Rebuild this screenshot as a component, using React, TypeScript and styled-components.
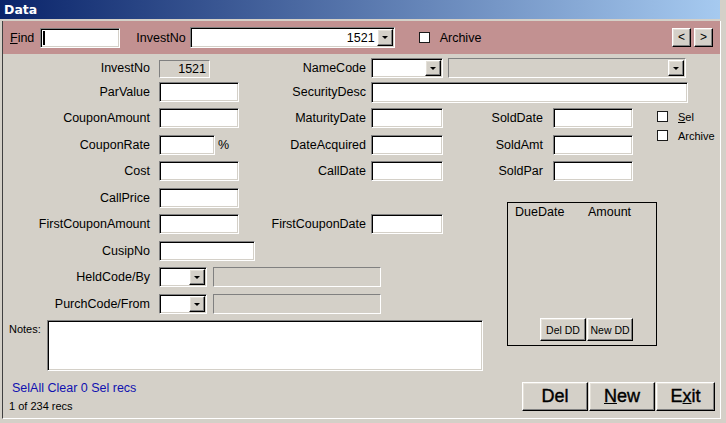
import React from "react";
import styled, { createGlobalStyle, css } from "styled-components";

const GlobalStyle = createGlobalStyle`
  html, body {
    margin: 0;
    padding: 0;
    background: #d4d0c8;
  }
  body {
    font-family: "Liberation Sans", Arial, sans-serif;
    font-size: 12.5px;
    color: #000;
  }
  * {
    box-sizing: border-box;
  }
`;

const sunken = css`
  border-style: solid;
  border-width: 1px;
  border-color: #808080 #fff #fff #808080;
  box-shadow: inset 1px 1px 0 #000, inset -1px -1px 0 #d4d0c8;
`;

const flat = css`
  border-style: solid;
  border-width: 1px;
  border-color: #808080 #fff #fff #808080;
`;

const raised = css`
  border-style: solid;
  border-width: 1px;
  border-color: #fff #000 #000 #fff;
  box-shadow: inset -1px -1px 0 #808080, inset 1px 1px 0 #e4e0d8;
  background: #d4d0c8;
`;

const Window = styled.div`
  width: 726px;
  height: 423px;
  display: flex;
  flex-direction: column;
  background: #d4d0c8;
  overflow: hidden;
`;

const TitleBar = styled.div`
  flex: none;
  width: 720px;
  height: 19px;
  padding-left: 4px;
  display: flex;
  align-items: center;
  background: linear-gradient(to right, #0a246a, #a6caf0);
  color: #fff;
  font-family: "DejaVu Sans", Verdana, sans-serif;
  font-weight: bold;
  font-size: 12.5px;
`;

const Frame = styled.div`
  flex: 1;
  margin: 2px 5px 4px 2px;
  border-left: 1px solid #404040;
  border-right: 1px solid #fff;
  border-bottom: 1px solid #fff;
  display: flex;
  flex-direction: column;
`;

const Band = styled.div`
  flex: none;
  height: 33px;
  padding: 0 7px 0 7px;
  display: flex;
  align-items: center;
  background: #c29191;
`;

const BandLabel = styled.span<{ $ml?: number; $mr?: number }>`
  margin-left: ${(p) => p.$ml ?? 0}px;
  margin-right: ${(p) => p.$mr ?? 4}px;
  white-space: nowrap;
`;

const TextBox = styled.input<{ $w: number; $h?: number }>`
  ${sunken};
  width: ${(p) => p.$w}px;
  height: ${(p) => p.$h ?? 20}px;
  padding: 0 3px;
  margin: 0;
  background: #fff;
  font: inherit;
  outline: none;
`;

const FindBox = styled.div`
  ${sunken};
  width: 80px;
  height: 20px;
  padding: 2px 0 2px 2px;
  background: #fff;
  display: flex;
`;

const Caret = styled.div`
  width: 2px;
  background: #000;
`;

const ReadBox = styled.div<{ $w: number; $h?: number; $mt?: number }>`
  ${flat};
  width: ${(p) => p.$w}px;
  height: ${(p) => p.$h ?? 20}px;
  margin-top: ${(p) => p.$mt ?? 0}px;
  padding-right: 3px;
  text-align: right;
  line-height: ${(p) => (p.$h ?? 20) - 2}px;
`;

const ComboBox = styled.div<{ $w: number; $h?: number; $off?: boolean }>`
  ${(p) => (p.$off ? flat : sunken)};
  width: ${(p) => p.$w}px;
  height: ${(p) => p.$h ?? 20}px;
  padding: 1px;
  display: flex;
  background: ${(p) => (p.$off ? "#d4d0c8" : "#fff")};
`;

const ComboValue = styled.div`
  flex: 1;
  padding-right: 2px;
  display: flex;
  align-items: center;
  justify-content: flex-end;
`;

const DropButton = styled.div`
  ${raised};
  width: 16px;
  display: flex;
  align-items: center;
  justify-content: center;
`;

const Arrow = styled.span`
  width: 0;
  height: 0;
  border-left: 3px solid transparent;
  border-right: 3px solid transparent;
  border-top: 3px solid #000;
`;

const Check = styled.span<{ $ml?: number }>`
  width: 11px;
  height: 11px;
  margin-left: ${(p) => p.$ml ?? 0}px;
  border: 1px solid #1a1a1a;
  background: #fff;
  flex: none;
`;

const NavGroup = styled.div`
  margin-left: auto;
  display: flex;
  gap: 3px;
`;

const NavButton = styled.button`
  ${raised};
  width: 19px;
  height: 19px;
  padding: 0;
  font-family: "Liberation Sans", Arial, sans-serif;
  font-size: 12px;
  line-height: 15px;
  color: #000;
`;

const FormGrid = styled.div`
  display: grid;
  grid-template-columns: 156px 103px 109px 72px 110px 80px 24px 1fr;
  grid-template-rows: 24px 26px 27px 26px 27px 26px 27px 26px 27px 26px 58px;
  padding-top: 4px;
`;

const Label = styled.div<{ $c: string; $r: number; $pr: number }>`
  grid-column: ${(p) => p.$c};
  grid-row: ${(p) => p.$r};
  align-self: start;
  height: 20px;
  line-height: 20px;
  padding-right: ${(p) => p.$pr}px;
  text-align: right;
  white-space: nowrap;
`;

const Cell = styled.div<{ $c: string; $r: number | string; $gap?: number }>`
  grid-column: ${(p) => p.$c};
  grid-row: ${(p) => p.$r};
  align-self: start;
  display: flex;
  align-items: center;
  gap: ${(p) => p.$gap ?? 0}px;
`;

const Percent = styled.span`
  margin-left: 3px;
`;

const SideChecks = styled.div`
  grid-column: 8;
  grid-row: 3 / 5;
  align-self: start;
  margin-top: 3px;
  display: flex;
  flex-direction: column;
  gap: 8px;
  font-size: 11px;
`;

const CheckRow = styled.div`
  display: flex;
  align-items: center;
  gap: 10px;
  height: 11px;
`;

const DueBox = styled.div`
  grid-column: 5 / 8;
  grid-row: 6 / 12;
  justify-self: end;
  align-self: start;
  margin-top: 14px;
  width: 150px;
  height: 144px;
  border: 1px solid #000;
  padding: 2px 0 4px 7px;
  display: flex;
  flex-direction: column;
`;

const DueHead = styled.div`
  display: flex;
  line-height: 15px;
`;

const DueCol = styled.span<{ $w?: number }>`
  width: ${(p) => (p.$w ? `${p.$w}px` : "auto")};
`;

const DueButtons = styled.div`
  margin-top: auto;
  padding-left: 25px;
  display: flex;
  gap: 1px;
`;

const SmallButton = styled.button`
  ${raised};
  width: 46px;
  height: 23px;
  padding: 0;
  font-family: "Liberation Sans", Arial, sans-serif;
  font-size: 10.5px;
  color: #000;
`;

const NotesRow = styled.div`
  grid-column: 1 / 7;
  grid-row: 11;
  display: flex;
  align-items: flex-start;
`;

const NotesLabel = styled.div`
  width: 44px;
  padding: 3px 0 0 6px;
  font-size: 11px;
`;

const NotesArea = styled.textarea`
  ${sunken};
  width: 436px;
  height: 51px;
  margin: 0;
  padding: 2px;
  resize: none;
  background: #fff;
  font: inherit;
  outline: none;
`;

const Footer = styled.div`
  display: flex;
  justify-content: space-between;
  align-items: flex-start;
  padding: 3px 5px 0 0;
`;

const Status = styled.div`
  display: flex;
  flex-direction: column;
`;

const SelLinks = styled.div`
  padding-left: 9px;
  line-height: 15px;
  color: #1010b0;
`;

const RecCount = styled.div`
  padding-left: 6px;
  margin-top: 3px;
  font-size: 11px;
  line-height: 14px;
`;

const BigButtons = styled.div`
  margin-top: 1px;
  display: flex;
  gap: 1px;
`;

const BigButton = styled.button<{ $w: number }>`
  ${raised};
  width: ${(p) => p.$w}px;
  height: 29px;
  padding: 0;
  font-family: "Liberation Sans", Arial, sans-serif;
  font-size: 18px;
  -webkit-text-stroke: 0.4px #000;
  color: #000;
`;

const Combo = ({
  w,
  h,
  off,
  value,
}: {
  w: number;
  h?: number;
  off?: boolean;
  value?: string;
}) => (
  <ComboBox $w={w} $h={h} $off={off}>
    <ComboValue>{value}</ComboValue>
    <DropButton>
      <Arrow />
    </DropButton>
  </ComboBox>
);

const App = () => {
  return (
    <>
      <GlobalStyle />
      <Window>
        <TitleBar>Data</TitleBar>
        <Frame>
          <Band>
            <BandLabel $mr={6}>
              <u>F</u>ind
            </BandLabel>
            <FindBox>
              <Caret />
            </FindBox>
            <BandLabel $ml={16}>InvestNo</BandLabel>
            <Combo w={205} h={21} value="1521" />
            <Check $ml={24} />
            <BandLabel $ml={10}>Archive</BandLabel>
            <NavGroup>
              <NavButton>&lt;</NavButton>
              <NavButton>&gt;</NavButton>
            </NavGroup>
          </Band>

          <FormGrid>
            <Label $c="1" $r={1} $pr={9}>InvestNo</Label>
            <Cell $c="2" $r={1}>
              <ReadBox $w={51} $h={18} $mt={2}>1521</ReadBox>
            </Cell>
            <Label $c="3" $r={1} $pr={5}>NameCode</Label>
            <Cell $c="4 / 9" $r={1} $gap={5}>
              <Combo w={72} />
              <Combo w={238} off />
            </Cell>

            <Label $c="1" $r={2} $pr={9}>ParValue</Label>
            <Cell $c="2" $r={2}>
              <TextBox $w={80} readOnly />
            </Cell>
            <Label $c="3" $r={2} $pr={5}>SecurityDesc</Label>
            <Cell $c="4 / 9" $r={2}>
              <TextBox $w={317} $h={21} readOnly />
            </Cell>

            <Label $c="1" $r={3} $pr={9}>CouponAmount</Label>
            <Cell $c="2" $r={3}>
              <TextBox $w={80} readOnly />
            </Cell>
            <Label $c="3" $r={3} $pr={5}>MaturityDate</Label>
            <Cell $c="4" $r={3}>
              <TextBox $w={72} readOnly />
            </Cell>
            <Label $c="5" $r={3} $pr={10}>SoldDate</Label>
            <Cell $c="6" $r={3}>
              <TextBox $w={80} readOnly />
            </Cell>
            <SideChecks>
              <CheckRow>
                <Check />
                <span>
                  <u>S</u>el
                </span>
              </CheckRow>
              <CheckRow>
                <Check />
                <span>Archive</span>
              </CheckRow>
            </SideChecks>

            <Label $c="1" $r={4} $pr={9}>CouponRate</Label>
            <Cell $c="2" $r={4}>
              <TextBox $w={56} readOnly />
              <Percent>%</Percent>
            </Cell>
            <Label $c="3" $r={4} $pr={5}>DateAcquired</Label>
            <Cell $c="4" $r={4}>
              <TextBox $w={72} readOnly />
            </Cell>
            <Label $c="5" $r={4} $pr={10}>SoldAmt</Label>
            <Cell $c="6" $r={4}>
              <TextBox $w={80} readOnly />
            </Cell>

            <Label $c="1" $r={5} $pr={9}>Cost</Label>
            <Cell $c="2" $r={5}>
              <TextBox $w={80} readOnly />
            </Cell>
            <Label $c="3" $r={5} $pr={5}>CallDate</Label>
            <Cell $c="4" $r={5}>
              <TextBox $w={72} readOnly />
            </Cell>
            <Label $c="5" $r={5} $pr={10}>SoldPar</Label>
            <Cell $c="6" $r={5}>
              <TextBox $w={80} readOnly />
            </Cell>

            <Label $c="1" $r={6} $pr={9}>CallPrice</Label>
            <Cell $c="2" $r={6}>
              <TextBox $w={80} readOnly />
            </Cell>

            <DueBox>
              <DueHead>
                <DueCol $w={73}>DueDate</DueCol>
                <DueCol>Amount</DueCol>
              </DueHead>
              <DueButtons>
                <SmallButton>Del DD</SmallButton>
                <SmallButton>New DD</SmallButton>
              </DueButtons>
            </DueBox>

            <Label $c="1" $r={7} $pr={9}>FirstCouponAmount</Label>
            <Cell $c="2" $r={7}>
              <TextBox $w={80} readOnly />
            </Cell>
            <Label $c="3" $r={7} $pr={5}>FirstCouponDate</Label>
            <Cell $c="4" $r={7}>
              <TextBox $w={72} readOnly />
            </Cell>

            <Label $c="1" $r={8} $pr={9}>CusipNo</Label>
            <Cell $c="2" $r={8}>
              <TextBox $w={96} readOnly />
            </Cell>

            <Label $c="1" $r={9} $pr={9}>HeldCode/By</Label>
            <Cell $c="2 / 5" $r={9} $gap={6}>
              <Combo w={48} />
              <ReadBox $w={168} />
            </Cell>

            <Label $c="1" $r={10} $pr={9}>PurchCode/From</Label>
            <Cell $c="2 / 5" $r={10} $gap={6}>
              <Combo w={48} />
              <ReadBox $w={168} />
            </Cell>

            <NotesRow>
              <NotesLabel>Notes:</NotesLabel>
              <NotesArea readOnly />
            </NotesRow>
          </FormGrid>

          <Footer>
            <Status>
              <SelLinks>SelAll Clear 0 Sel recs</SelLinks>
              <RecCount>1 of 234 recs</RecCount>
            </Status>
            <BigButtons>
              <BigButton $w={66}>Del</BigButton>
              <BigButton $w={66}>
                <u>N</u>ew
              </BigButton>
              <BigButton $w={59}>
                E<u>x</u>it
              </BigButton>
            </BigButtons>
          </Footer>
        </Frame>
      </Window>
    </>
  );
};

export default App;
